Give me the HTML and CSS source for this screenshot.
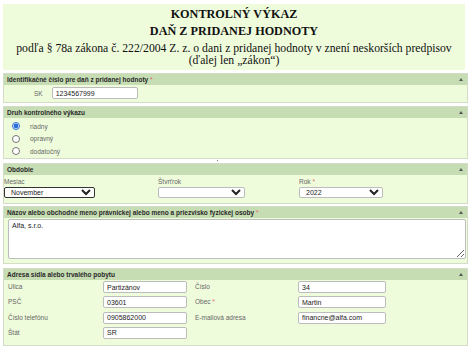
FILE: index.html
```html
<!DOCTYPE html>
<html lang="sk">
<head>
<meta charset="UTF-8">
<title>Kontrolný výkaz DPH</title>
<link rel="stylesheet" href="styles.css">
</head>
<body>

<div class="page">

  <div class="doc-head">
    <h1>KONTROLNÝ VÝKAZ</h1>
    <h2>DAŇ Z PRIDANEJ HODNOTY</h2>
    <p>podľa § 78a zákona č. 222/2004 Z. z. o dani z pridanej hodnoty v znení neskorších predpisov<br>(ďalej len „zákon“)</p>
  </div>

  <div class="panel panel-dic">
    <div class="panel-head">Identifikačné číslo pre daň z pridanej hodnoty <span class="req">*</span><span class="caret"></span></div>
    <div class="panel-body dic-row">
      <span class="dic-prefix">SK</span>
      <input class="field dic-input" type="text" value="1234567999">
    </div>
  </div>

  <div class="panel panel-druh">
    <div class="panel-head">Druh kontrolného výkazu<span class="caret"></span></div>
    <div class="panel-body radio-list">
      <label class="radio"><input type="radio" name="druh" checked> riadny</label>
      <label class="radio"><input type="radio" name="druh"> opravný</label>
      <label class="radio"><input type="radio" name="druh"> dodatočný</label>
    </div>
  </div>

  <div class="divider-dot"></div>

  <div class="panel panel-period">
    <div class="panel-head">Obdobie<span class="caret"></span></div>
    <div class="panel-body period-row">
      <div class="period-col">
        <span class="lbl">Mesiac</span>
        <select class="field sel sel-month"><option>November</option></select>
      </div>
      <div class="period-col">
        <span class="lbl">Štvrťrok</span>
        <select class="field sel sel-quarter"><option></option></select>
      </div>
      <div class="period-col">
        <span class="lbl">Rok <span class="req">*</span></span>
        <select class="field sel sel-year"><option>2022</option></select>
      </div>
    </div>
  </div>

  <div class="panel panel-name">
    <div class="panel-head">Názov alebo obchodné meno právnickej alebo meno a priezvisko fyzickej osoby <span class="req">*</span><span class="caret"></span></div>
    <div class="panel-body name-body">
      <textarea class="field name-area">Alfa, s.r.o.</textarea>
    </div>
  </div>

  <div class="panel panel-addr">
    <div class="panel-head">Adresa sídla alebo trvalého pobytu<span class="caret"></span></div>
    <div class="panel-body addr-grid">
      <span class="lbl">Ulica</span>
      <input class="field addr-input" type="text" value="Partizánov">
      <span class="lbl">Číslo</span>
      <input class="field addr-input wide" type="text" value="34">

      <span class="lbl">PSČ</span>
      <input class="field addr-input" type="text" value="03601">
      <span class="lbl">Obec <span class="req">*</span></span>
      <input class="field addr-input wide" type="text" value="Martin">

      <span class="lbl">Číslo telefónu</span>
      <input class="field addr-input" type="text" value="0905862000">
      <span class="lbl">E-mailová adresa</span>
      <input class="field addr-input wide" type="text" value="financne@alfa.com">

      <span class="lbl">Štát</span>
      <input class="field addr-input" type="text" value="SR">
    </div>
  </div>

</div>

</body>
</html>
```

FILE: styles.css
```css
/* --- Basic Setup --- */
body {
  margin: 0;
  background-color: #fff;
  font-family: "Liberation Sans", Arial, sans-serif;
  color: #333;
}

.page {
  padding: 4px 6px 0 3px;
}

/* --- Document heading --- */
.doc-head {
  background-color: #effcdc;
  margin-right: 3px;
  padding: 2px 0 3px;
  text-align: center;
  font-family: "Liberation Serif", "Times New Roman", serif;
  color: #111;
}

.doc-head h1,
.doc-head h2 {
  font-size: 12.2px;
  font-weight: 700;
  margin: 0;
  line-height: 17px;
}

.doc-head h2 {
  margin-bottom: 3px;
}

.doc-head p {
  font-size: 11.7px;
  margin: 0;
  line-height: 12px;
}

/* --- Collapsible panels --- */
.panel {
  background-color: #effcdc;
  border: 1px solid #d3dcc6;
  margin-top: 3px;
}

.panel-period {
  margin-top: 2px;
}

.panel-name {
  margin-top: 2px;
}

.panel-addr {
  margin-top: 4px;
}

.panel-head {
  position: relative;
  background-color: #c6dcb2;
  font-size: 6.5px;
  font-weight: 700;
  color: #2a2a2a;
  height: 11px;
  line-height: 11px;
  padding: 0 3px;
}

.req {
  color: #e26a6a;
  font-weight: 400;
}

/* small "collapse" arrow on the right of each panel header */
.caret {
  position: absolute;
  right: 4px;
  top: 4px;
  width: 0;
  height: 0;
  border-left: 2px solid transparent;
  border-right: 2px solid transparent;
  border-bottom: 3px solid #555;
}

.panel-body {
  font-size: 6.5px;
  color: #666;
}

.field {
  font-family: "Liberation Sans", Arial, sans-serif;
  font-size: 7px;
  color: #222;
  background: #fff;
  border: 1px solid #bcbcbc;
  border-radius: 2px;
  box-sizing: border-box;
  margin: 0;
}

input.field {
  height: 12px;
  padding: 0 3px;
}

/* --- DIC row --- */
.dic-row {
  display: flex;
  align-items: center;
  padding: 2px 0 3px 30px;
  gap: 9px;
}

.dic-input {
  width: 86px;
}

/* --- Radio list --- */
.radio-list {
  display: flex;
  flex-direction: column;
  gap: 2.5px;
  padding: 3px 0 2px 8px;
}

.radio {
  display: flex;
  align-items: center;
  gap: 10px;
  height: 10px;
}

.radio input {
  width: 8px;
  height: 8px;
  margin: 0;
  accent-color: #2b6fd6;
}

.divider-dot {
  width: 1px;
  height: 1px;
  background: #777;
  margin: 1px 0 0 214px;
}

/* --- Period --- */
.period-row {
  display: grid;
  grid-template-columns: 154px 141px auto;
  padding: 3px 0 5px 0;
}

.period-col {
  display: flex;
  flex-direction: column;
  gap: 1px;
}

.lbl {
  line-height: 8px;
}

.sel {
  height: 11px;
  padding: 0 2px;
  font-size: 7px;
}

.sel-month {
  width: 91px;
  border-color: #333;
}

.sel-quarter {
  width: 87px;
}

.sel-year {
  width: 84px;
}

/* --- Name --- */
.name-body {
  padding: 1px 1px 4px 4px;
}

.name-area {
  display: block;
  width: 100%;
  height: 40px;
  resize: vertical;
  padding: 2px 3px;
}

/* --- Address grid --- */
.addr-grid {
  display: grid;
  grid-template-columns: 95px 92px 103px 88px;
  row-gap: 3.3px;
  align-items: center;
  padding: 1px 0 6px 4px;
}

.addr-input {
  width: 84px;
}

.addr-input.wide {
  width: 88px;
}
```
